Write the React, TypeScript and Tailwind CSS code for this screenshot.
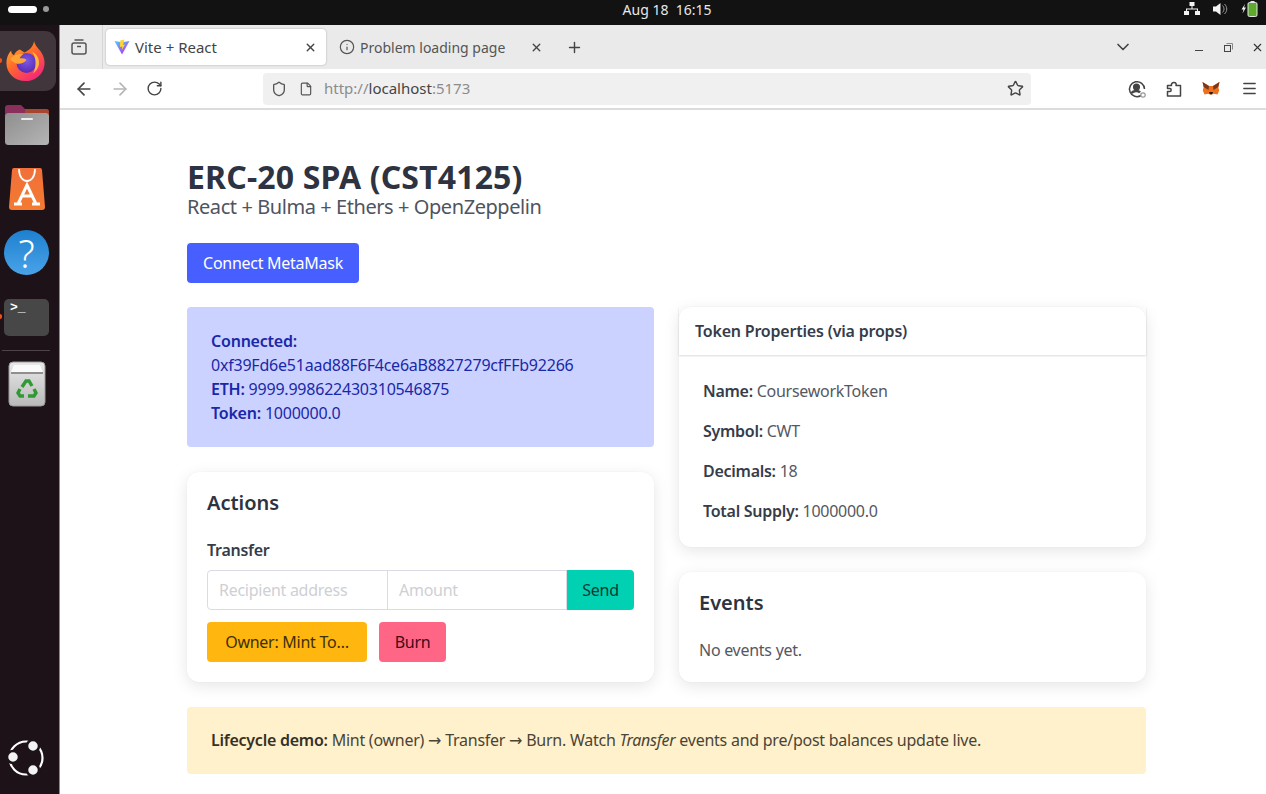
import { ArrowLeft, ArrowRight, ChevronDown, File, Info, Menu, Plus, RotateCw, Shield, Star, X } from "lucide-react";

function Firefox() {
  return (
    <svg width="43" height="42" viewBox="0 0 44 44">
      <defs>
        <linearGradient id="ffOuter" x1="0" y1="0" x2="0.7" y2="1">
          <stop offset="0%" stopColor="#ffbd2e" />
          <stop offset="50%" stopColor="#ff6a2b" />
          <stop offset="100%" stopColor="#f5257a" />
        </linearGradient>
        <radialGradient id="ffGlobe" cx="0.5" cy="0.4" r="0.6">
          <stop offset="0%" stopColor="#7b5be6" />
          <stop offset="100%" stopColor="#5a2bb5" />
        </radialGradient>
      </defs>
      <path d="M31 1c1 5 4 7 7 11 4 6 5 12 3 18-3 8-10 13-19 13C11 43 2 35 2 24c0-5 2-10 5-13 0 3 1 4 3 5 1-3 3-5 6-6l5 3c4-2 9-5 10-12z" fill="url(#ffOuter)" />
      <circle cx="23" cy="24" r="10.5" fill="url(#ffGlobe)" />
      <path d="M6 20c4-5 9-6 14-5-2 1-4 3-4 4 3 0 6 0 7 2-3 4-8 5-12 3-2-1-4-2-5-4z" fill="#ffa436" />
      <path d="M29 12c5 3 8 8 7 14-1 4-3 7-6 9 3-6 4-15-1-23z" fill="#ffd23f" opacity="0.8" />
    </svg>
  );
}

function FilesIcon() {
  return (
    <svg width="46" height="44" viewBox="0 0 46 44">
      <defs>
        <linearGradient id="filesBody" x1="0" y1="0" x2="1" y2="1">
          <stop offset="0%" stopColor="#8e8e8e" />
          <stop offset="100%" stopColor="#b5b5b5" />
        </linearGradient>
      </defs>
      <path d="M1 5a3 3 0 0 1 3-3h13l4 4h21a3 3 0 0 1 3 3v10H1z" fill="#8a2f5c" />
      <path d="M21 6h21a3 3 0 0 1 3 3v10H21z" fill="#a8452f" />
      <rect x="1" y="10" width="44" height="32" rx="3.500" fill="url(#filesBody)" />
      <rect x="17" y="15" width="12" height="2" rx="1" fill="#ececec" />
    </svg>
  );
}

function StoreIcon() {
  return (
    <svg width="36" height="42" viewBox="0 0 36 42">
      <defs>
        <linearGradient id="storeBody" x1="0" y1="0" x2="0" y2="1">
          <stop offset="0%" stopColor="#f0703a" />
          <stop offset="100%" stopColor="#f47a30" />
        </linearGradient>
      </defs>
      <path d="M3 2a2 2 0 0 1 2-2h26a2 2 0 0 1 2 2l3 37a3 3 0 0 1-3 3H3a3 3 0 0 1-3-3z" fill="url(#storeBody)" />
      <path d="M10 1c0 16 16 16 16 0" fill="none" stroke="#fff" strokeWidth="1.800" />
      <path d="M9 36 18 17l9 19M12 28h12M5 36h8M23 36h8" fill="none" stroke="#fff" strokeWidth="3" />
    </svg>
  );
}

function HelpIcon() {
  return (
    <div className="flex h-[45px] w-[45px] items-center justify-center rounded-full bg-gradient-to-b from-[#1c80cf] to-[#48a3e8]">
      <span className="text-[38px] font-light leading-none text-white">?</span>
    </div>
  );
}

function TerminalIcon() {
  return (
    <div className="h-[37px] w-[45px] rounded-[5px] bg-[#474747] pl-[6px] pt-[1px] font-['Liberation_Mono',monospace] text-[13px] font-bold leading-[16px] text-white">
      &gt;_
    </div>
  );
}

function TrashIcon() {
  return (
    <svg width="38" height="46" viewBox="0 0 38 46">
      <defs>
        <linearGradient id="trashBody" x1="0" y1="0" x2="0" y2="1">
          <stop offset="0%" stopColor="#e8e8e8" />
          <stop offset="100%" stopColor="#b9b9b9" />
        </linearGradient>
      </defs>
      <rect x="1" y="1" width="36" height="44" rx="4" fill="url(#trashBody)" stroke="#9a9a9a" />
      <path d="M6 4h26l3 7H3z" fill="#fafafa" />
      <path d="M3 11h32v2H3z" fill="#8f8f8f" />
      <g fill="none" stroke="#2f9a34" strokeWidth="3.400">
        <path d="M14 26l4-6h3l3 5" />
        <path d="M26 28l2 4-2 3h-6" />
        <path d="M16 35h-4l-2-3 2-4" />
      </g>
    </svg>
  );
}

function UbuntuLogo() {
  return (
    <svg width="38" height="38" viewBox="0 0 38 38">
      <circle cx="19" cy="19" r="16.500" fill="none" stroke="#fff" strokeWidth="2.200" />
      <g fill="#f3f3f3" stroke="#1d1218" strokeWidth="2.500">
        <circle cx="26" cy="7" r="6" />
        <circle cx="6" cy="18" r="6" />
        <circle cx="26" cy="31" r="6" />
      </g>
    </svg>
  );
}

function ViteLogo() {
  return (
    <svg width="16" height="16" viewBox="0 0 16 16">
      <defs>
        <linearGradient id="viteBody" x1="0" y1="0" x2="0.6" y2="1">
          <stop offset="0%" stopColor="#41d1ff" />
          <stop offset="100%" stopColor="#bd34fe" />
        </linearGradient>
      </defs>
      <path d="M0.500 2 8 3.200 15.500 2 8 15.500z" fill="url(#viteBody)" />
      <path d="M10.500 0.500 6.200 1.500 6 8l2.200-.5-.3 3.400L11 5.500l-2 .3z" fill="#ffd62e" />
    </svg>
  );
}

function FoxIcon() {
  return (
    <svg width="18" height="16" viewBox="0 0 18 16">
      <path d="M0.500 1 7 5h4l6.500-4-1.200 5 .9 3.500-1.700 4-3.700-.8L9 13.800l-2.800-1.100-3.700.8-1.700-4L1.700 6z" fill="#f0701f" />
      <path d="M0.500 1 7 5 6.500 9 1.700 6zM17.500 1 11 5l.5 4 4.800-3z" fill="#7a3a1a" />
      <path d="M7 11h4l-.8 2.200H7.800z" fill="#2d1a10" />
      <path d="M3 9l3 1-1 2zM15 9l-3 1 1 2z" fill="#e2761b" />
    </svg>
  );
}

function FirefoxView() {
  return (
    <svg width="18" height="18" viewBox="0 0 18 18" fill="none" stroke="#555" strokeWidth="1.500">
      <path d="M4.500 2h9" />
      <rect x="2" y="5" width="14" height="11" rx="2" />
      <path d="M7 8.500h4" />
    </svg>
  );
}

function AccountIcon() {
  return (
    <svg width="20" height="20" viewBox="0 0 20 20" fill="none" stroke="#444" strokeWidth="1.500">
      <path d="M14 16.500A7.500 7.500 0 1 1 17.500 10" />
      <circle cx="9.500" cy="8" r="2.800" fill="#444" />
      <path d="M4.500 14c2-2.500 7-2.500 8.500-.5" strokeWidth="2.500" />
      <circle cx="16" cy="16" r="2.200" stroke="#999" strokeWidth="1.200" />
    </svg>
  );
}

function ExtensionIcon() {
  return (
    <svg width="18" height="18" viewBox="0 0 18 18" fill="none" stroke="#444" strokeWidth="1.500" strokeLinejoin="round">
      <path d="M9 2.500c2 0 2.500 1.500 2 3h4.500v10.500H2.500v-4.500h2.500c1.500 0 1.500-3 0-3H2.500V5.500H6.500C6 4 7 2.500 9 2.500z" />
    </svg>
  );
}

function TopBarIcons() {
  return (
    <div className="flex items-center gap-[13px]">
      <svg width="16" height="14" viewBox="0 0 16 14" fill="#f2f2f2">
        <rect x="5.500" y="0" width="5" height="4" />
        <rect x="0" y="9" width="5" height="4" />
        <rect x="11" y="9" width="5" height="4" />
        <path d="M7.500 4h1v2.500h5.500V9h-1V7.500H3V9H2V6.500h5.500z" />
      </svg>
      <svg width="15" height="14" viewBox="0 0 15 14" fill="#f2f2f2">
        <path d="M0 4.500h3L7.500 1v12L3 9.500H0z" />
        <path d="M9.500 3.500c2 2 2 5 0 7M11.500 2c3 3 3 7 0 10" fill="none" stroke="#9a9a9a" />
      </svg>
      <svg width="17" height="16" viewBox="0 0 17 16">
        <path d="M4 3 0.500 8.500h2l-1 4 3.500-6H3z" fill="#f2f2f2" />
        <rect x="7" y="1.500" width="9" height="14" rx="1.500" fill="#5eaa2e" stroke="#e5e5e5" />
        <rect x="9.500" y="0" width="4" height="1.500" fill="#e5e5e5" />
      </svg>
    </div>
  );
}

function Dock() {
  return (
    <aside className="flex h-full w-[60px] shrink-0 flex-col border-r border-[#8a8a8a] bg-[#1d1218]">
      <div className="relative mt-[6px] flex h-[60px] w-[56px] items-center justify-center rounded-r-[11px] bg-[#40363b] pr-[5px]">
        <Firefox />
        <span className="absolute left-0 top-[27px] h-[5px] w-[2px] rounded-r-full bg-[#e95420]" />
      </div>
      <div className="ml-[4px] mt-[12px] flex h-[44px] items-center"><FilesIcon /></div>
      <div className="ml-[9px] mt-[20px] flex h-[44px] items-center"><StoreIcon /></div>
      <div className="ml-[4px] mt-[19px] flex h-[45px] items-center"><HelpIcon /></div>
      <div className="relative mt-[23px] flex h-[38px] items-center pl-[4px]">
        <TerminalIcon />
        <span className="absolute left-0 top-[16px] h-[5px] w-[2px] rounded-r-full bg-[#e95420]" />
      </div>
      <div className="ml-[2px] mt-[14px] h-px w-[48px] bg-[#4d4449]" />
      <div className="ml-[8px] mt-[10px] flex h-[46px] items-center"><TrashIcon /></div>
      <div className="mb-[17px] ml-[7px] mt-auto flex"><UbuntuLogo /></div>
    </aside>
  );
}

function BrowserChrome() {
  return (
    <>
      <div className="flex h-[44px] shrink-0 bg-[#eaeaea] text-[14px] text-[#444]">
        <div className="flex h-[44px] w-[43px] shrink-0 items-center justify-center border-r border-[#d6d6d6] pr-[4px]">
          <FirefoxView />
        </div>
        <div className="ml-[3px] mt-[4px] flex h-[36px] w-[220px] items-center rounded-[4px] bg-white pl-[8px] pr-[9px] shadow-[0_0_2px_rgba(0,0,0,0.3)]">
          <ViteLogo />
          <span className="ml-[5px] flex-1 text-[15px]">Vite + React</span>
          <X size={13} strokeWidth={2.500} color="#444" />
        </div>
        <div className="ml-[12px] mt-[4px] flex h-[36px] w-[212px] items-center pl-[1px] pr-[7px] text-[#555]">
          <Info size={16} strokeWidth={1.800} color="#555" />
          <span className="ml-[5px] flex-1">Problem loading page</span>
          <X size={13} strokeWidth={2.500} color="#444" />
        </div>
        <div className="ml-[16px] flex items-center"><Plus size={17} color="#444" /></div>
        <div className="ml-auto flex items-center">
          <ChevronDown size={20} color="#444" />
          <div className="ml-[62px] h-px w-[8px] translate-y-[3px] bg-[#444]" />
          <svg className="ml-[21px]" width="9" height="9" viewBox="0 0 9 9" fill="none" stroke="#444">
            <rect x="0.500" y="2.500" width="6" height="6" />
            <path d="M2.500 0.500h6v6" stroke="#888" />
          </svg>
          <X className="ml-[18px] mr-[2px]" size={13} color="#333" />
        </div>
      </div>
      <div className="flex h-[41px] shrink-0 items-center border-b-2 border-[#dcdcdc] bg-white pl-[14px]">
        <ArrowLeft size={20} color="#444" />
        <ArrowRight className="ml-[16px]" size={20} color="#b5b5b5" />
        <RotateCw className="ml-[16px]" size={17} color="#444" />
        <div className="ml-[100px] flex h-[32px] w-[768px] items-center rounded-[4px] bg-[#f0f0f0] pl-[8px] pr-[7px] text-[15px] text-[#8c8c8c]">
          <Shield size={16} color="#555" />
          <File className="ml-[12px]" size={14} color="#555" />
          <span className="ml-[11px]">http://<span className="text-[#444]">localhost</span>:5173</span>
          <Star className="ml-auto" size={17} color="#444" />
        </div>
        <div className="ml-[96px] flex"><AccountIcon /></div>
        <div className="ml-[18px] flex"><ExtensionIcon /></div>
        <div className="ml-[19px] flex"><FoxIcon /></div>
        <Menu className="ml-[21px]" size={17} color="#444" />
      </div>
    </>
  );
}

const cardShadow = "shadow-[0_4px_16px_rgba(10,10,10,0.1),0_0_1px_rgba(10,10,10,0.08)]";

function Page() {
  return (
    <main className="min-h-0 flex-1 bg-white pl-[127px] pt-[47px] font-['Noto_Sans',sans-serif] text-[16px] leading-[24px] tracking-[-0.27px] text-[#55585f]">
      <div className="w-[959px]">
        <h1 className="text-[32px] font-bold leading-[40px] tracking-[0.15px] text-[#2d3340]">ERC-20 SPA (CST4125)</h1>
        <p className="-mt-[5px] text-[20px] leading-[30px] tracking-[-0.43px] text-[#4f5460]">React + Bulma + Ethers + OpenZeppelin</p>

        <button className="mt-[21px] flex h-[40px] w-[172px] items-center justify-center rounded-[4px] bg-[#485fff] text-white">Connect MetaMask</button>

        <div className="mt-[24px] grid grid-cols-2 gap-x-[25px]">
          <div className="flex flex-col gap-[25px]">
            <div className="flex h-[140px] flex-col justify-center rounded-[4px] bg-[#ccd2ff] px-[24px] tracking-[-0.22px] text-[#1a28a8]">
              <p><strong className="font-semibold">Connected:</strong></p>
              <p>0xf39Fd6e51aad88F6F4ce6aB8827279cfFFb92266</p>
              <p><strong className="font-semibold">ETH:</strong> 9999.998622430310546875</p>
              <p><strong className="font-semibold">Token:</strong> 1000000.0</p>
            </div>

            <section className={`h-[210px] rounded-[12px] bg-white px-[20px] pt-[19px] ${cardShadow}`}>
              <h2 className="text-[20px] font-semibold leading-[24px] tracking-normal text-[#2d3340]">Actions</h2>
              <label className="mt-[23px] block font-semibold text-[#363c4a]">Transfer</label>
              <div className="mt-[8px] flex h-[40px]">
                <input placeholder="Recipient address" className="h-[40px] w-[181px] rounded-l-[4px] border border-[#dbdbe3] px-[11px] outline-none placeholder:text-[#cfcfd4]" />
                <input placeholder="Amount" className="-ml-px h-[40px] w-[180px] border border-[#dbdbe3] px-[11px] outline-none placeholder:text-[#cfcfd4]" />
                <button className="flex h-[40px] w-[67px] items-center justify-center rounded-r-[4px] bg-[#00d1b2] text-[#0c3b34]">Send</button>
              </div>
              <div className="mt-[12px] flex gap-[12px]">
                <button className="flex h-[40px] w-[160px] items-center justify-center rounded-[4px] bg-[#ffb70f] text-[#3d2f05]">Owner: Mint To…</button>
                <button className="flex h-[40px] w-[67px] items-center justify-center rounded-[4px] bg-[#ff6685] text-[#3d0a18]">Burn</button>
              </div>
            </section>
          </div>

          <div className="flex flex-col gap-[25px]">
            <section className={`h-[240px] rounded-[12px] bg-white ${cardShadow}`}>
              <header className="flex h-[48px] items-center px-[16px] font-semibold tracking-[-0.2px] text-[#363c4a] shadow-[0_1px_2px_rgba(10,10,10,0.15)]">Token Properties (via props)</header>
              <div className="flex flex-col gap-[16px] px-[24px] pt-[24px]">
                <p><strong className="font-semibold text-[#363c4a]">Name:</strong> CourseworkToken</p>
                <p><strong className="font-semibold text-[#363c4a]">Symbol:</strong> CWT</p>
                <p><strong className="font-semibold text-[#363c4a]">Decimals:</strong> 18</p>
                <p><strong className="font-semibold text-[#363c4a]">Total Supply:</strong> 1000000.0</p>
              </div>
            </section>

            <section className={`h-[110px] rounded-[12px] bg-white px-[20px] pt-[19px] ${cardShadow}`}>
              <h2 className="text-[20px] font-semibold leading-[24px] tracking-normal text-[#2d3340]">Events</h2>
              <p className="mt-[23px]">No events yet.</p>
            </section>
          </div>
        </div>

        <div className="mt-[25px] flex h-[67px] items-center rounded-[4px] bg-[#fff1cc] px-[24px] tracking-[-0.25px] text-[#4a4436]">
          <p><strong className="font-semibold text-[#363026]">Lifecycle demo:</strong> Mint (owner) <span className="font-['DejaVu_Sans',sans-serif]">→</span> Transfer <span className="font-['DejaVu_Sans',sans-serif]">→</span> Burn. Watch <em>Transfer</em> events and pre/post balances update live.</p>
        </div>
      </div>
    </main>
  );
}

export default function App() {
  return (
    <div className="flex h-[794px] w-[1266px] flex-col overflow-hidden font-['Noto_Sans',sans-serif]">
      <div className="flex h-[25px] shrink-0 items-center bg-[#121212] pb-[7px] pl-[8px] pr-[8px] text-[14px] text-[#e8e8e8]">
        <div className="flex w-[200px] items-center gap-[6px]">
          <span className="h-[7px] w-[29px] rounded-full bg-white" />
          <span className="h-[6px] w-[6px] rounded-full bg-[#9a9a9a]" />
        </div>
        <div className="flex-1 pr-[58px] text-center">Aug 18&nbsp; 16:15</div>
        <TopBarIcons />
      </div>
      <div className="flex min-h-0 flex-1">
        <Dock />
        <div className="flex min-w-0 flex-1 flex-col">
          <BrowserChrome />
          <Page />
        </div>
      </div>
    </div>
  );
}
